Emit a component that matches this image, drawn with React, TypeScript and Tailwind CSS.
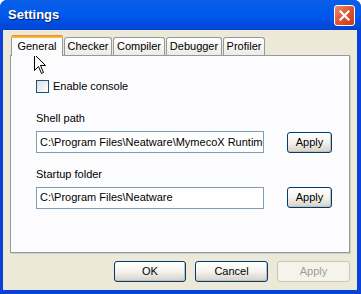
import React from 'react';

const font = "font-['Liberation_Sans',Arial,sans-serif]";

const Tab: React.FC<{ label: string; w: string; active?: boolean }> = ({ label, w, active }) =>
  active ? (
    <div className={`${w} h-[21px] -mb-px z-10 relative bg-[#FCFCFE] border border-b-0 border-[#919B9C] rounded-t-[3px] flex items-center justify-center text-[11px] text-black`}>
      <div className="absolute -top-px -left-px -right-px h-[3px] rounded-t-[3px] bg-gradient-to-b from-[#E68B2C] to-[#FFC73C]" />
      <span className="mt-[1px]">{label}</span>
    </div>
  ) : (
    <div className={`${w} h-[18px] bg-gradient-to-b from-white to-[#ECEBE6] border border-b-0 border-[#919B9C] rounded-t-[3px] flex items-center justify-center text-[11px] text-black`}>
      {label}
    </div>
  );

const XpButton: React.FC<{ label: string; w: string; disabled?: boolean }> = ({ label, w, disabled }) => (
  <div
    className={`${w} h-[21px] rounded-[3px] border flex items-center justify-center text-[11px] ${
      disabled
        ? 'border-[#C9C7BA] bg-[#F5F4EA] text-[#A19E8F]'
        : 'border-[#003C74] bg-gradient-to-b from-white via-[#F4F3EE] to-[#D6D0C5] text-black shadow-[inset_-1px_-1px_0_#C4C1B4]'
    }`}
  >
    {label}
  </div>
);

const TextField: React.FC<{ value: string }> = ({ value }) => (
  <div className="w-[228px] h-[22px] border border-[#7F9DB9] bg-white flex items-center pl-[3px] overflow-hidden whitespace-nowrap text-[11px] text-black">
    {value}
  </div>
);

export default function App() {
  return (
    <div className={`${font} w-[361px] h-[294px] bg-[#0842D6] rounded-t-[7px] flex flex-col overflow-hidden relative`}>
      {/* Title bar */}
      <div className="h-[30px] shrink-0 bg-gradient-to-b from-[#0A5EE8] via-[#0058EE] to-[#0043D4] flex items-center pl-[8px] pr-[6px]">
        <span className="text-white font-bold text-[13px] flex-1 [text-shadow:1px_1px_0_#0A1E6A]">Settings</span>
        <div className="w-[21px] h-[21px] rounded-[3px] border border-white bg-gradient-to-br from-[#E98B6E] via-[#E1542F] to-[#C53A1C] flex items-center justify-center">
          <svg width="11" height="11" viewBox="0 0 11 11">
            <path d="M1.5 1.5 L9.5 9.5 M9.5 1.5 L1.5 9.5" stroke="white" strokeWidth="2.2" strokeLinecap="square" />
          </svg>
        </div>
      </div>

      {/* Body */}
      <div className="flex-1 ml-[3px] mr-[4px] mb-[4px] bg-[#ECE9D8] flex flex-col pl-[7px] pr-[7px]">
        <div className="flex items-end gap-[1px] mt-[5px] pl-[1px]">
          <Tab label="General" w="w-[52px]" active />
          <Tab label="Checker" w="w-[48px]" />
          <Tab label="Compiler" w="w-[52px]" />
          <Tab label="Debugger" w="w-[56px]" />
          <Tab label="Profiler" w="w-[42px]" />
        </div>
        <div className="h-[198px] bg-[#FCFCFE] border border-[#919B9C] shadow-[1px_1px_0_#D0CEBF] flex flex-col pl-[25px] text-[11px] text-black">
          <div className="flex items-center gap-[4px] mt-[22px]">
            <div className="w-[13px] h-[13px] border border-[#1C5180] bg-gradient-to-br from-[#DCDCD7] to-white" />
            <span>Enable console</span>
          </div>
          <div className="mt-[15px]">Shell path</div>
          <div className="flex items-center mt-[5px]">
            <TextField value="C:\Program Files\Neatware\MymecoX Runtime" />
            <div className="ml-[23px]">
              <XpButton label="Apply" w="w-[45px]" />
            </div>
          </div>
          <div className="mt-[13px]">Startup folder</div>
          <div className="flex items-center mt-[4px]">
            <TextField value="C:\Program Files\Neatware" />
            <div className="ml-[23px]">
              <XpButton label="Apply" w="w-[45px]" />
            </div>
          </div>
        </div>
        <div className="flex justify-end gap-[9px] mt-[8px]">
          <XpButton label="OK" w="w-[72px]" />
          <XpButton label="Cancel" w="w-[73px]" />
          <XpButton label="Apply" w="w-[73px]" disabled />
        </div>
      </div>

      {/* Mouse cursor */}
      <svg className="absolute left-[34px] top-[54px]" width="13" height="21" viewBox="0 0 13 21">
        <path d="M0.5 0.5 L0.5 16.5 L4.5 12.5 L7.5 19.5 L9.5 18.5 L6.5 11.5 L11.5 11.5 Z" fill="white" stroke="black" strokeWidth="1" />
      </svg>
    </div>
  );
}
